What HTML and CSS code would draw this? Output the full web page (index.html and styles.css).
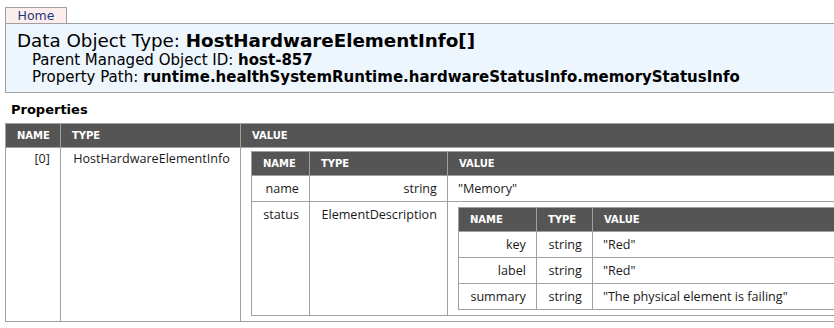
FILE: index.html
```html
<!DOCTYPE html>
<html>
<head>
<meta charset="utf-8">
<title>Managed Object Browser</title>
<link rel="stylesheet" href="styles.css">
</head>
<body>
<div class="page">
  <div class="tabs"><span class="tab">Home</span></div>
  <div class="header">
    <div class="title">Data Object Type: <b>HostHardwareElementInfo[]</b></div>
    <div class="sub">Parent Managed Object ID: <b>host-857</b></div>
    <div class="sub">Property Path: <b>runtime.healthSystemRuntime.hardwareStatusInfo.memoryStatusInfo</b></div>
  </div>
  <div class="section">Properties</div>
  <table class="grid">
    <tr>
      <th class="w-o1">NAME</th>
      <th class="w-o2">TYPE</th>
      <th>VALUE</th>
    </tr>
    <tr>
      <td class="c-name c-outer">[0]</td>
      <td class="c-type c-outer">HostHardwareElementInfo</td>
      <td class="c-val c-outer">
        <table class="grid">
          <tr>
            <th class="w-n1">NAME</th>
            <th class="w-n2">TYPE</th>
            <th>VALUE</th>
          </tr>
          <tr>
            <td class="c-name">name</td>
            <td class="c-type">string</td>
            <td>"Memory"</td>
          </tr>
          <tr>
            <td class="c-name">status</td>
            <td class="c-type">ElementDescription</td>
            <td class="c-val">
              <table class="grid">
                <tr>
                  <th class="w-i1">NAME</th>
                  <th class="w-i2">TYPE</th>
                  <th>VALUE</th>
                </tr>
                <tr>
                  <td class="c-name">key</td>
                  <td class="c-type">string</td>
                  <td>"Red"</td>
                </tr>
                <tr>
                  <td class="c-name">label</td>
                  <td class="c-type">string</td>
                  <td>"Red"</td>
                </tr>
                <tr>
                  <td class="c-name">summary</td>
                  <td class="c-type">string</td>
                  <td>"The physical element is failing"</td>
                </tr>
              </table>
            </td>
          </tr>
        </table>
      </td>
    </tr>
  </table>
</div>
</body>
</html>
```
FILE: styles.css
```css
html, body {
  margin: 0;
  padding: 0;
  background: #fff;
  overflow: hidden;
}
.page {
  width: 1100px;
  padding: 7px 0 0 5px;
  font-family: "DejaVu Sans", Verdana, sans-serif;
  color: #000;
}
.tabs {
  display: flex;
}
.tab {
  display: block;
  box-sizing: border-box;
  width: 62px;
  height: 16px;
  border: 1px solid #a0a0a0;
  border-bottom: none;
  background: #fdeeee;
  color: #1c3a78;
  font-size: 12.5px;
  line-height: 15px;
  text-align: center;
}
.header {
  border: 1px solid #a0a0a0;
  border-right: none;
  background: #eef6fd;
  padding: 5px 0 6px 11px;
}
.title {
  font-size: 18.3px;
  line-height: 23px;
}
.sub {
  font-size: 15px;
  line-height: 17px;
  padding-left: 15px;
}
.section {
  font-size: 13px;
  font-weight: bold;
  line-height: 16px;
  padding: 9px 0 5px 6px;
}
.grid {
  border-collapse: collapse;
  width: 100%;
}
.grid th, .grid td {
  border: 1px solid #a0a0a0;
  padding: 5px 10px;
  vertical-align: top;
}
.grid th {
  background: #555;
  color: #fff;
  font-family: "DejaVu Sans", Verdana, sans-serif;
  font-weight: bold;
  font-size: 10px;
  line-height: 12px;
  padding: 6px 10px 5px 11px;
  text-align: left;
}
.grid td {
  font-family: "Open Sans", "Noto Sans", sans-serif;
  font-size: 12.6px;
  line-height: 15px;
  color: #1a1a1a;
}
.grid td.c-outer {
  padding-top: 3px;
}
.grid td.c-name, .grid td.c-type {
  text-align: right;
}
.w-o1 { width: 32px; }
.w-o2 { width: 158px; }
.w-n1 { width: 36px; }
.w-n2 { width: 116px; }
.w-i1 { width: 56px; }
.w-i2 { width: 34px; }
```
